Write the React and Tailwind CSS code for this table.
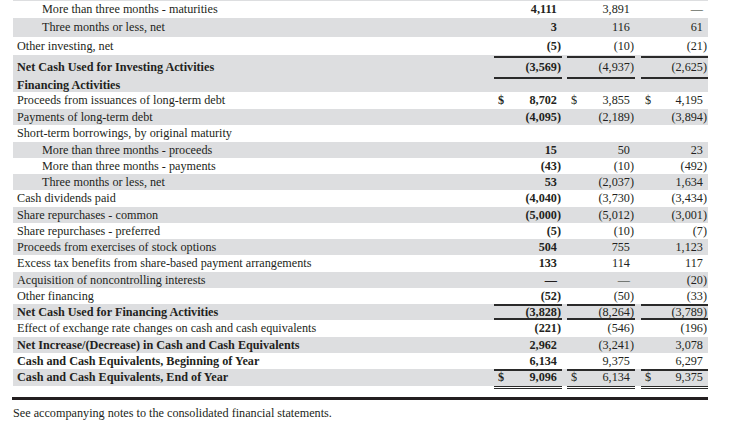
import React from "react";

const rows = [
  { label: "More than three months - maturities", indent: true, vals: ["4,111", "3,891", "—"], h: "h-[17px]" },
  { label: "Three months or less, net", indent: true, shaded: true, vals: ["3", "116", "61"], h: "h-[19px]" },
  { label: "Other investing, net", vals: ["(5)", "(10)", "(21)"], h: "h-[18px]" },
  { label: "Net Cash Used for Investing Activities", bold: true, shaded: true, vals: ["(3,569)", "(4,937)", "(2,625)"], h: "h-[24px]", cell: "mt-[1px] border-t-2 border-b-2 border-[#2a2a2a]" },
  { label: "Financing Activities", bold: true, shaded: true, vals: ["", "", ""], h: "h-[13px]" },
  { label: "Proceeds from issuances of long-term debt", vals: ["8,702", "3,855", "4,195"], dollar: true, h: "h-[17px]" },
  { label: "Payments of long-term debt", shaded: true, vals: ["(4,095)", "(2,189)", "(3,894)"], h: "h-[16.25px]" },
  { label: "Short-term borrowings, by original maturity", vals: ["", "", ""], h: "h-[16.25px]" },
  { label: "More than three months - proceeds", indent: true, shaded: true, vals: ["15", "50", "23"], h: "h-[16.25px]" },
  { label: "More than three months - payments", indent: true, vals: ["(43)", "(10)", "(492)"], h: "h-[16.25px]" },
  { label: "Three months or less, net", indent: true, shaded: true, vals: ["53", "(2,037)", "1,634"], h: "h-[16.25px]" },
  { label: "Cash dividends paid", vals: ["(4,040)", "(3,730)", "(3,434)"], h: "h-[16.25px]" },
  { label: "Share repurchases - common", shaded: true, vals: ["(5,000)", "(5,012)", "(3,001)"], h: "h-[16.25px]" },
  { label: "Share repurchases - preferred", vals: ["(5)", "(10)", "(7)"], h: "h-[16.25px]" },
  { label: "Proceeds from exercises of stock options", shaded: true, vals: ["504", "755", "1,123"], h: "h-[16.25px]" },
  { label: "Excess tax benefits from share-based payment arrangements", vals: ["133", "114", "117"], h: "h-[16.25px]" },
  { label: "Acquisition of noncontrolling interests", shaded: true, vals: ["—", "—", "(20)"], h: "h-[16.25px]" },
  { label: "Other financing", vals: ["(52)", "(50)", "(33)"], h: "h-[16.25px]" },
  { label: "Net Cash Used for Financing Activities", bold: true, shaded: true, vals: ["(3,828)", "(8,264)", "(3,789)"], h: "h-[16.25px]", cell: "border-t-2 border-b-2 border-[#2a2a2a]" },
  { label: "Effect of exchange rate changes on cash and cash equivalents", vals: ["(221)", "(546)", "(196)"], h: "h-[16.25px]" },
  { label: "Net Increase/(Decrease) in Cash and Cash Equivalents", bold: true, shaded: true, vals: ["2,962", "(3,241)", "3,078"], h: "h-[16.25px]" },
  { label: "Cash and Cash Equivalents, Beginning of Year", bold: true, vals: ["6,134", "9,375", "6,297"], h: "h-[16.25px]" },
  { label: "Cash and Cash Equivalents, End of Year", bold: true, shaded: true, vals: ["9,096", "6,134", "9,375"], dollar: true, h: "h-[17px]", cell: "h-[20px] self-start border-t-2 border-b-[3px] border-double border-[#2a2a2a] pb-[3px]" },
];

const colW = ["w-[68px]", "ml-[5px] w-[68px]", "ml-[6px] w-[67px]"];

function Cell({ value, idx, dollar, extra }) {
  const paren = value.endsWith(")");
  const boldNum = idx === 0;
  return (
    <div
      className={`${colW[idx]} flex items-center justify-between pl-[4px] pr-[1px] ${boldNum ? "font-bold" : ""} ${extra || ""}`}
    >
      <span>{dollar ? "$" : ""}</span>
      <span className="whitespace-nowrap">
        {value}
        {value !== "" && !paren ? <span className="invisible">)</span> : null}
      </span>
    </div>
  );
}

export default function App() {
  return (
    <div className="w-[729px] h-[434px] bg-white text-[#231f20] font-['Liberation_Serif',serif] text-[12.2px] leading-none overflow-hidden">
      <div className="ml-[13px] w-[695px]">
        <div className="h-[1px] bg-[#dddee0]" />
        {rows.map((r, i) => (
          <div key={i} className={`flex ${r.h} ${r.shaded ? "bg-[#dddee0]" : ""}`}>
            <div
              className={`w-[481px] flex items-center whitespace-nowrap ${r.indent ? "pl-[29px]" : "pl-[4px]"} ${r.bold ? "font-bold" : ""}`}
            >
              {r.label}
            </div>
            {r.vals.map((v, j) => (
              <Cell key={j} value={v} idx={j} dollar={r.dollar} extra={r.cell} />
            ))}
          </div>
        ))}
      </div>
      <div className="ml-[12px] mt-[11px] w-[696px] h-[3px] bg-[#231f20]" />
      <div className="ml-[13px] mt-[7px] whitespace-nowrap">
        See accompanying notes to the consolidated financial statements.
      </div>
    </div>
  );
}
